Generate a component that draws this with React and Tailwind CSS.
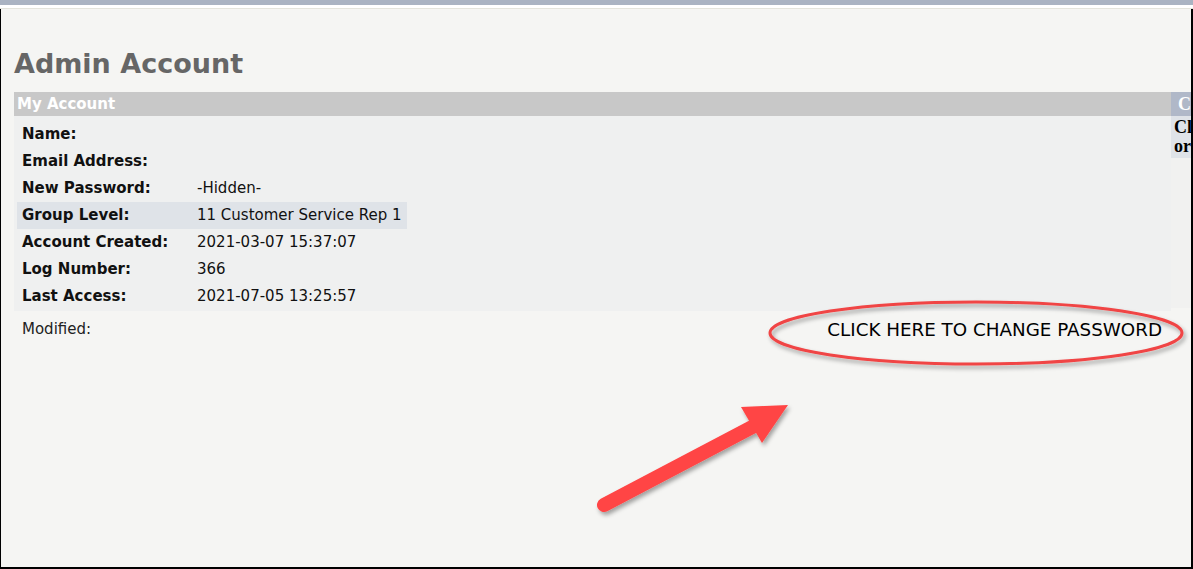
export default function App() {
  const rows = [
    ["Name:", ""],
    ["Email Address:", ""],
    ["New Password:", "-Hidden-"],
    ["Group Level:", "11 Customer Service Rep 1", true],
    ["Account Created:", "2021-03-07 15:37:07"],
    ["Log Number:", "366"],
    ["Last Access:", "2021-07-05 13:25:57"],
  ];
  return (
    <div className="relative w-[1193px] h-[569px] overflow-hidden bg-[#f5f5f3]" style={{ fontFamily: '"DejaVu Sans", Verdana, sans-serif' }}>
      <div className="h-[5px] bg-[#aab3c2]" />
      <div className="h-[3px] bg-white" />
      <div className="h-px bg-[#e4e4dc]" />
      <div className="border-l border-black border-r-2 border-b-2 h-[560px]">
        <div className="pl-[13px] pt-[31px]">
          <h1 className="text-[27px] font-bold text-[#666666] leading-[32px] h-[52px] pt-[8px]">Admin Account</h1>
          <div className="flex">
            <div className="w-[1158px]">
              <div className="h-[24px] bg-[#c8c8c8] text-white font-bold text-[15px] leading-[24px] pl-[3px]">My Account</div>
              <div className="bg-[#eff0f0] pt-[5px] pb-[1px] pl-[3px]">
                {rows.map(([k, v, hl]) => (
                  <div key={k} className={`flex h-[27px] items-center w-[390px] text-[15px] text-[#111] ${hl ? "bg-[#dfe3e8]" : ""}`}>
                    <div className="w-[180px] pl-[5px] font-bold">{k}</div>
                    <div>{v}</div>
                  </div>
                ))}
              </div>
              <div className="flex justify-between items-center h-[38px] pl-[8px] pr-[9px]">
                <span className="text-[15px] text-[#222] -mt-[2px]">Modified:</span>
                <span className="text-[18.3px] text-black">CLICK HERE TO CHANGE PASSWORD</span>
              </div>
            </div>
            <div className="w-[20px] overflow-hidden">
              <div className="h-[24px] bg-[#b0b8c8] text-white font-bold text-[18px] leading-[24px] pl-[7px]" style={{ fontFamily: '"Liberation Serif", serif' }}>C</div>
              <div className="h-[42px] bg-[#dfe3e8] text-black font-bold text-[18px] leading-[19px] pl-[3px] pt-[2px] whitespace-nowrap" style={{ fontFamily: '"Liberation Serif", serif' }}>
                <div>Cl</div>
                <div>or</div>
              </div>
              <div className="h-[150px] bg-[#f1f1f0]" />
            </div>
          </div>
        </div>
      </div>
      <svg className="absolute left-0 top-0 pointer-events-none" width="1193" height="569">
        <defs>
          <filter id="sh" x="-20%" y="-20%" width="140%" height="140%">
            <feDropShadow dx="2" dy="3" stdDeviation="2" floodColor="#000" floodOpacity="0.35" />
          </filter>
        </defs>
        <ellipse cx="976" cy="333" rx="206" ry="31" fill="none" stroke="#f04545" strokeWidth="3" filter="url(#sh)" />
        <g filter="url(#sh)">
          <line x1="604" y1="505" x2="756" y2="425" stroke="#ff4545" strokeWidth="14" strokeLinecap="round" />
          <polygon points="741,407 788,405 762,443" fill="#ff4545" />
        </g>
      </svg>
    </div>
  );
}
